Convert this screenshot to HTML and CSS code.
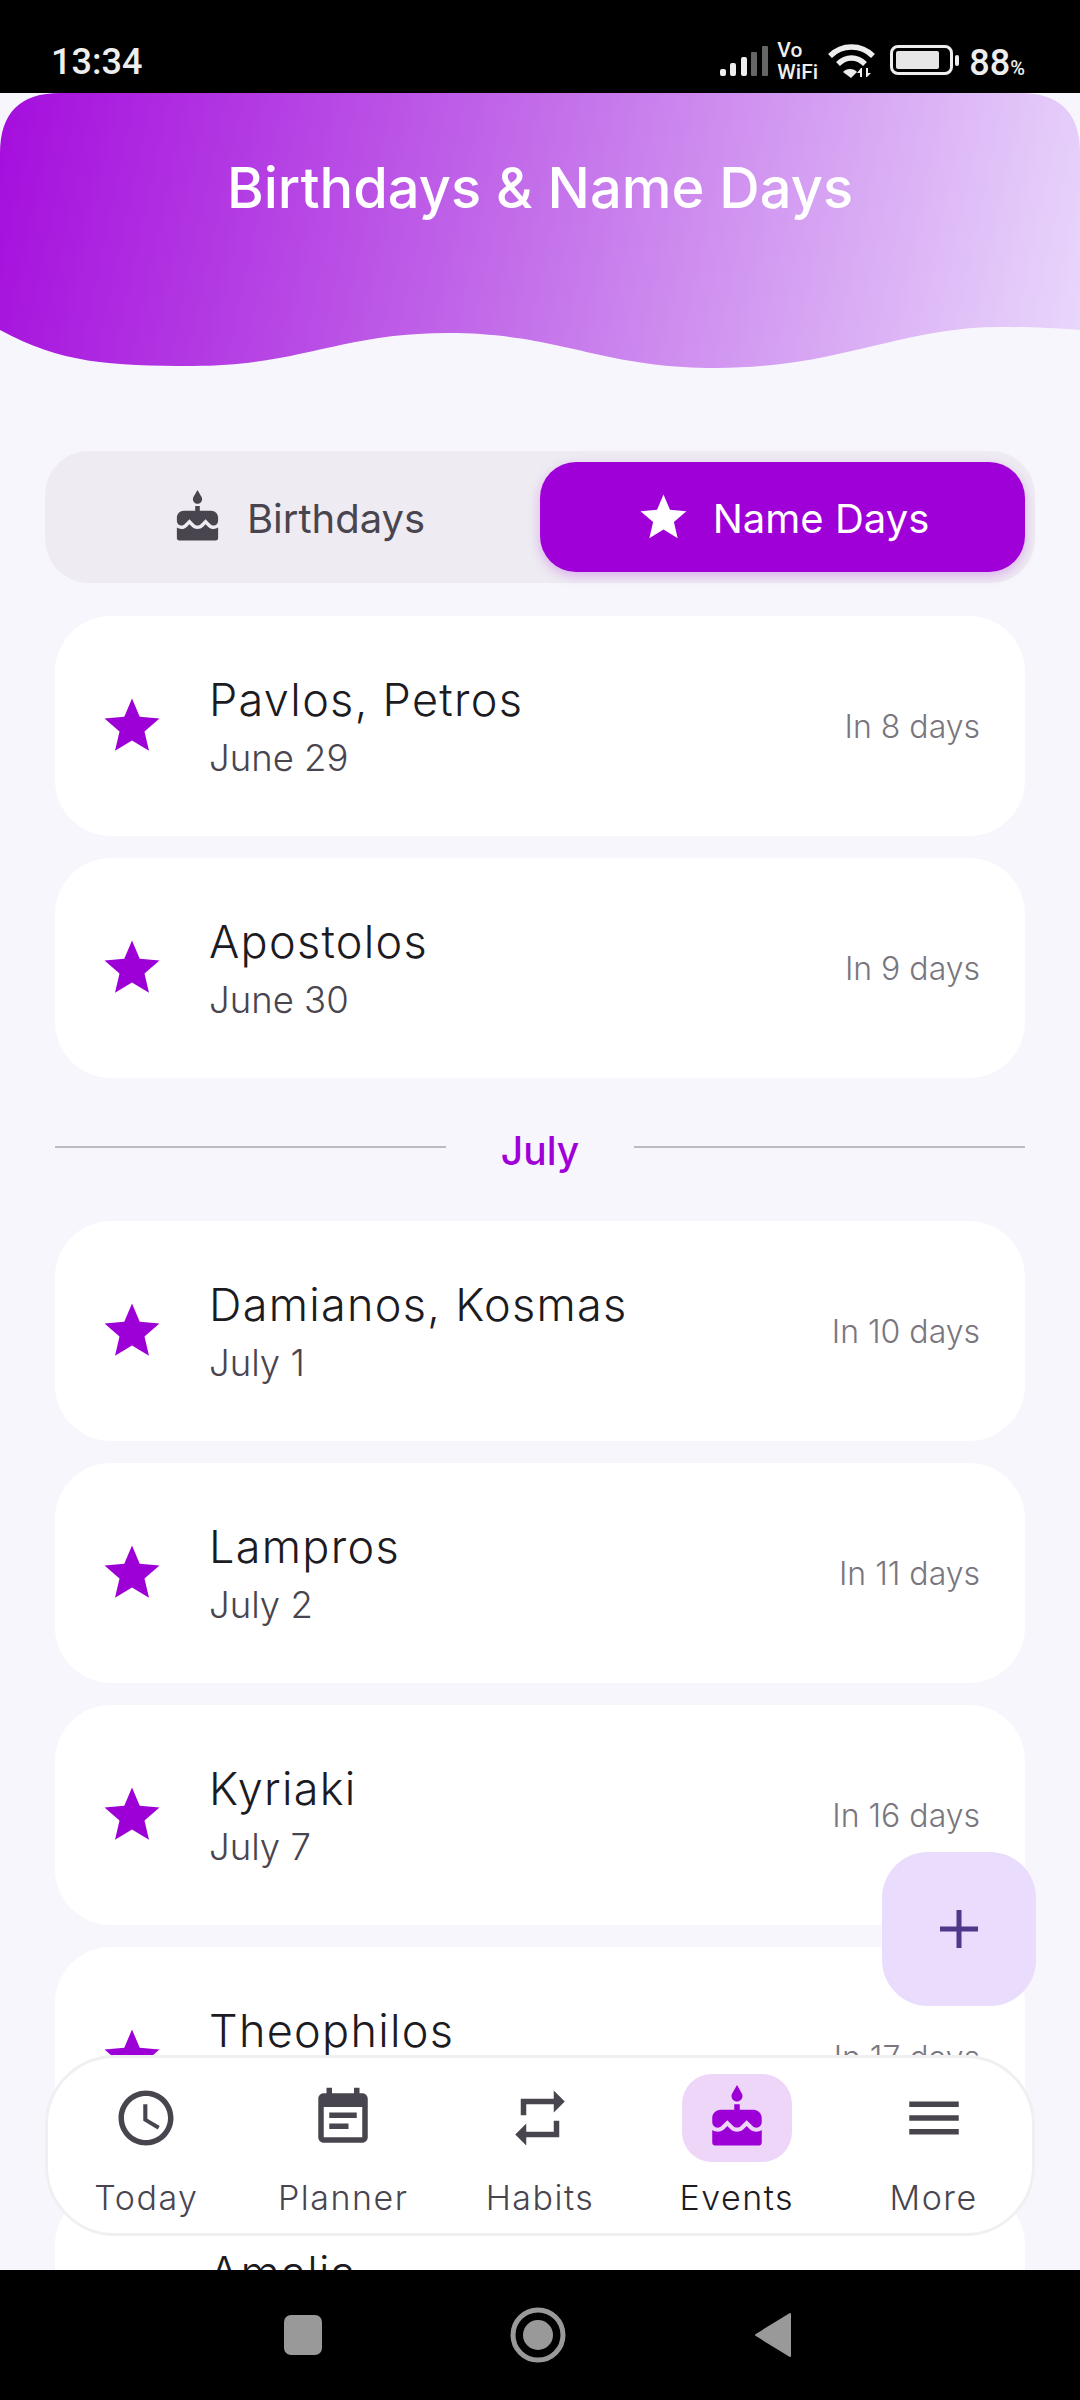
FILE: index.html
```html
<!DOCTYPE html>
<html lang="en">
<head>
<meta charset="UTF-8">
<meta name="viewport" content="width=device-width, initial-scale=1.0">
<title>Birthdays &amp; Name Days</title>
<link rel="stylesheet" href="styles.css">
</head>
<body>
<svg class="sprite" aria-hidden="true">
<symbol id="i-star" viewBox="0 0 24 24"><path d="M12 17.27L18.18 21l-1.64-7.03L22 9.24l-7.19-.61L12 2 9.19 8.63 2 9.24l5.46 4.73L5.82 21z"/></symbol>
<symbol id="i-cake" viewBox="0 0 24 24"><path d="M12 6c1.11 0 2-.9 2-2 0-.38-.1-.73-.29-1.03L12 0l-1.71 2.97c-.19.3-.29.65-.29 1.03 0 1.1.9 2 2 2zm4.6 9.99l-1.07-1.07-1.08 1.07c-1.3 1.3-3.58 1.31-4.89 0l-1.07-1.07-1.09 1.07C6.75 16.64 5.88 17 4.96 17c-.73 0-1.4-.23-1.96-.61V21c0 .55.45 1 1 1h16c.55 0 1-.45 1-1v-4.61c-.56.38-1.23.61-1.96.61-.92 0-1.79-.36-2.44-1.01zM18 9h-5V7h-2v2H6c-1.66 0-3 1.34-3 3v1.54c0 1.08.88 1.96 1.96 1.96.52 0 1.02-.2 1.38-.57l2.14-2.13 2.13 2.13c.74.74 2.03.74 2.77 0l2.14-2.13 2.13 2.13c.37.37.86.57 1.38.57 1.08 0 1.96-.88 1.96-1.96V12C21 10.34 19.66 9 18 9z"/></symbol>
<symbol id="i-clock" viewBox="0 0 24 24"><path d="M11.99 2C6.47 2 2 6.48 2 12s4.47 10 9.99 10C17.52 22 22 17.52 22 12S17.52 2 11.99 2zM12 20c-4.42 0-8-3.58-8-8s3.58-8 8-8 8 3.58 8 8-3.58 8-8 8zm.5-13H11v6l5.25 3.15.75-1.23-4.5-2.67z"/></symbol>
<symbol id="i-note" viewBox="0 0 24 24"><path d="M17 10H7v2h10v-2zm2-7h-1V1h-2v2H8V1H6v2H5c-1.11 0-1.99.9-1.99 2L3 19c0 1.1.89 2 2 2h14c1.1 0 2-.9 2-2V5c0-1.1-.9-2-2-2zm0 16H5V8h14v11zm-5-5H7v2h7v-2z"/></symbol>
<symbol id="i-repeat" viewBox="0 0 24 24"><path d="M7 7h10v3l4-4-4-4v3H5v6h2V7zm10 10H7v-3l-4 4 4 4v-3h12v-6h-2v4z"/></symbol>
<symbol id="i-menu" viewBox="0 0 24 24"><path d="M3 18h18v-2H3v2zm0-5h18v-2H3v2zm0-7v2h18V6H3z"/></symbol>
</svg>

<div class="phone">
  <!-- Status bar -->
  <div class="status-bar">
    <span class="clock">13:34</span>
    <div class="status-icons">
      <svg class="signal" width="48" height="30" viewBox="0 0 48 30">
        <rect x="0" y="23" width="6" height="7" rx="2" fill="#eee"/>
        <rect x="10" y="17" width="6" height="13" rx="2" fill="#eee"/>
        <rect x="21" y="11" width="6" height="19" rx="2" fill="#eee"/>
        <rect x="31" y="6" width="6" height="24" rx="1" fill="#666"/>
        <rect x="42" y="0" width="6" height="30" rx="1" fill="#666"/>
      </svg>
      <div class="vowifi"><span>Vo</span><span>WiFi</span></div>
      <svg class="wifi" width="47" height="34" viewBox="0 0 47 34">
        <path d="M2 12C14 0 33 0 45 12" fill="none" stroke="#eee" stroke-width="5.5"/>
        <path d="M10 20C18 12 29 12 37 20" fill="none" stroke="#eee" stroke-width="5.5"/>
        <path d="M15 28l8 6 6-6c-3-4-11-4-14 0z" fill="#eee"/>
        <path d="M33 24l-4 5h3v4h2v-9zM38 24h2v5h3l-4 4h-1z" fill="#eee"/>
      </svg>
      <div class="battery"><div class="battery-level"></div></div>
      <div class="battery-tip"></div>
      <span class="battery-text">88<small>%</small></span>
    </div>
  </div>

  <main class="screen">
    <header class="header">
      <h1>Birthdays &amp; Name Days</h1>
    </header>

    <div class="segments">
      <div class="segment">
        <svg class="segment-icon"><use href="#i-cake"/></svg>
        <span>Birthdays</span>
      </div>
      <div class="segment active">
        <svg class="segment-icon"><use href="#i-star"/></svg>
        <span>Name Days</span>
      </div>
    </div>

    <div class="list">
      <div class="card">
        <svg class="star"><use href="#i-star"/></svg>
        <div class="card-text"><div class="name">Pavlos, Petros</div><div class="date">June 29</div></div>
        <div class="when">In 8 days</div>
      </div>
      <div class="card">
        <svg class="star"><use href="#i-star"/></svg>
        <div class="card-text"><div class="name">Apostolos</div><div class="date">June 30</div></div>
        <div class="when">In 9 days</div>
      </div>

      <div class="month"><span>July</span></div>

      <div class="card">
        <svg class="star"><use href="#i-star"/></svg>
        <div class="card-text"><div class="name">Damianos, Kosmas</div><div class="date">July 1</div></div>
        <div class="when">In 10 days</div>
      </div>
      <div class="card">
        <svg class="star"><use href="#i-star"/></svg>
        <div class="card-text"><div class="name">Lampros</div><div class="date">July 2</div></div>
        <div class="when">In 11 days</div>
      </div>
      <div class="card">
        <svg class="star"><use href="#i-star"/></svg>
        <div class="card-text"><div class="name">Kyriaki</div><div class="date">July 7</div></div>
        <div class="when">In 16 days</div>
      </div>
      <div class="card">
        <svg class="star"><use href="#i-star"/></svg>
        <div class="card-text"><div class="name">Theophilos</div><div class="date">July 8</div></div>
        <div class="when">In 17 days</div>
      </div>
      <div class="card">
        <svg class="star"><use href="#i-star"/></svg>
        <div class="card-text"><div class="name">Amalia</div><div class="date">July 10</div></div>
        <div class="when">In 19 days</div>
      </div>
    </div>

    <div class="fab">
      <svg width="38" height="38" viewBox="0 0 38 38"><path d="M19 0v38M0 19h38" stroke="#4f378a" stroke-width="5"/></svg>
    </div>

    <!-- Bottom tabs -->
    <nav class="tabs">
      <div class="tab">
        <div class="tab-icon"><svg><use href="#i-clock"/></svg></div>
        <span>Today</span>
      </div>
      <div class="tab">
        <div class="tab-icon"><svg><use href="#i-note"/></svg></div>
        <span>Planner</span>
      </div>
      <div class="tab">
        <div class="tab-icon"><svg><use href="#i-repeat"/></svg></div>
        <span>Habits</span>
      </div>
      <div class="tab current">
        <div class="tab-icon"><svg><use href="#i-cake"/></svg></div>
        <span>Events</span>
      </div>
      <div class="tab">
        <div class="tab-icon"><svg><use href="#i-menu"/></svg></div>
        <span>More</span>
      </div>
    </nav>
  </main>

  <!-- Android buttons -->
  <div class="system-bar">
    <div class="sys-square"></div>
    <svg width="56" height="56" viewBox="0 0 56 56">
      <circle cx="28" cy="28" r="25" fill="none" stroke="#999" stroke-width="5"/>
      <circle cx="28" cy="28" r="15" fill="#999"/>
    </svg>
    <svg width="38" height="46" viewBox="0 0 38 46">
      <path d="M36 2v42L2 23z" fill="#999" stroke="#999" stroke-width="2" stroke-linejoin="round"/>
    </svg>
  </div>
</div>
</body>
</html>
```

FILE: styles.css
```css
* {
    box-sizing: border-box;
}
body {
    margin: 0;
    background: #000;
    font-family: Inter, "Noto Sans", sans-serif;
}
.sprite {
    display: none;
}
.phone {
    width: 1080px;
    height: 2400px;
    display: flex;
    flex-direction: column;
}

/* Status bar */
.status-bar {
    height: 93px;
    flex: none;
    background: #000;
    color: #eee;
    display: flex;
    justify-content: space-between;
    align-items: flex-start;
    padding: 41px 55px 0 51px;
}
.clock {
    font-family: Roboto, sans-serif;
    font-weight: 500;
    font-size: 36px;
    line-height: 42px;
}
.status-icons {
    display: flex;
    align-items: flex-start;
    margin-top: 1px;
}
.signal {
    margin: 4px 9px 0 0;
}
.vowifi {
    display: flex;
    flex-direction: column;
    font-family: Roboto, sans-serif;
    font-weight: 500;
    font-size: 21px;
    line-height: 22px;
    width: 43px;
    margin-right: 8px;
    margin-top: -3px;
}
.wifi {
    margin: 2px 15px 0 0;
}
.battery {
    width: 63px;
    height: 30px;
    margin-top: 3px;
    border: 3px solid #eee;
    border-radius: 8px;
    padding: 3px;
}
.battery-level {
    width: 43px;
    height: 18px;
    background: #e6e6e6;
    border-radius: 2px;
}
.battery-tip {
    width: 4px;
    height: 11px;
    margin: 13px 10px 0 2px;
    background: #eee;
    border-radius: 2px;
}
.battery-text {
    font-family: Roboto, sans-serif;
    font-weight: 500;
    font-size: 36px;
    line-height: 42px;
}
.battery-text small {
    font-size: 20px;
}

/* Main screen */
.screen {
    position: relative;
    flex: none;
    height: 2177px;
    overflow: hidden;
    background: #f7f6fc;
}
.header {
    height: 275px;
    background: linear-gradient(102deg, #a50ddd 0%, #c471ea 50%, #e9d8fc 100%);
    clip-path: path("M0 60Q0 0 60 0H1020Q1080 0 1080 60V237C1050 235 1030 234 1000 234C900 234 840 275 716 275C600 275 560 240 448 240C340 240 300 273 193 273C110 273 60 270 0 237Z");
    padding-top: 60px;
}
.header h1 {
    margin: 0;
    text-align: center;
    color: #fff;
    font-weight: 500;
    font-size: 56px;
    line-height: 70px;
}

/* Tabs at the top */
.segments {
    margin: 83px 45px 0;
    height: 132px;
    padding: 11px 10px;
    background: #eeebf2;
    border-radius: 44px;
    display: grid;
    grid-template-columns: 1fr 1fr;
}
.segment {
    display: flex;
    align-items: center;
    justify-content: center;
    gap: 22px;
    font-size: 40px;
    font-weight: 400;
    color: #49454f;
    border-radius: 36px;
}
.segment span {
    padding-top: 3px;
}
.segment-icon {
    width: 55px;
    height: 55px;
    fill: #49454f;
}
.segment.active {
    background: #a000d8;
    color: #fff;
    box-shadow: 0 4px 12px rgba(160, 0, 216, 0.25);
}
.segment.active .segment-icon {
    fill: #fff;
}

/* List */
.list {
    padding: 33px 55px 0;
    display: flex;
    flex-direction: column;
    gap: 22px;
}
.card {
    height: 220px;
    flex: none;
    background: #fff;
    border-radius: 56px;
    display: flex;
    align-items: center;
    padding: 0 45px 0 44px;
}
.star {
    width: 66px;
    height: 66px;
    fill: #9c00d6;
    margin-right: 44px;
    flex: none;
}
.card-text {
    flex: 1;
    padding-top: 5px;
}
.name {
    font-size: 45px;
    line-height: 58px;
    font-weight: 300;
    letter-spacing: 1.3px;
    color: #1c1b1f;
}
.date {
    font-size: 36.5px;
    line-height: 58px;
    font-weight: 300;
    color: #49454f;
}
.when {
    font-size: 32px;
    font-weight: 300;
    color: #79767e;
}
.month {
    display: flex;
    align-items: center;
    gap: 55px;
    height: 94px;
    margin-bottom: 5px;
    color: #a000d8;
    font-size: 39px;
    font-weight: 500;
}
.month span {
    padding-top: 7px;
}
.month::before,
.month::after {
    content: "";
    flex: 1;
    height: 2px;
    background: #bdbbc2;
}

/* Floating button */
.fab {
    position: absolute;
    left: 882px;
    top: 1759px;
    width: 154px;
    height: 154px;
    border-radius: 46px;
    background: #eadcfd;
    display: flex;
    align-items: center;
    justify-content: center;
}

/* Bottom navigation */
.tabs {
    position: absolute;
    left: 45px;
    top: 1962px;
    width: 990px;
    height: 181px;
    background: #fff;
    border: 3px solid #f0eff2;
    border-radius: 70px;
    display: grid;
    grid-template-columns: repeat(5, 1fr);
    padding-top: 16px;
}
.tab {
    display: flex;
    flex-direction: column;
    align-items: center;
    font-size: 34px;
    font-weight: 300;
    letter-spacing: 1.5px;
    color: #49454f;
}
.tab-icon {
    width: 110px;
    height: 88px;
    border-radius: 30px;
    display: flex;
    align-items: center;
    justify-content: center;
    margin-bottom: 15px;
}
.tab-icon svg {
    width: 66px;
    height: 66px;
    fill: #49454f;
}
.tab.current {
    color: #1c1b1f;
}
.tab.current .tab-icon {
    background: #eed6f8;
}
.tab.current .tab-icon svg {
    fill: #9c00d6;
}

/* Android buttons */
.system-bar {
    flex: 1;
    background: #000;
    display: flex;
    align-items: center;
    justify-content: space-between;
    padding: 0 288px 0 284px;
}
.sys-square {
    width: 38px;
    height: 40px;
    border-radius: 7px;
    background: #999;
}
```
